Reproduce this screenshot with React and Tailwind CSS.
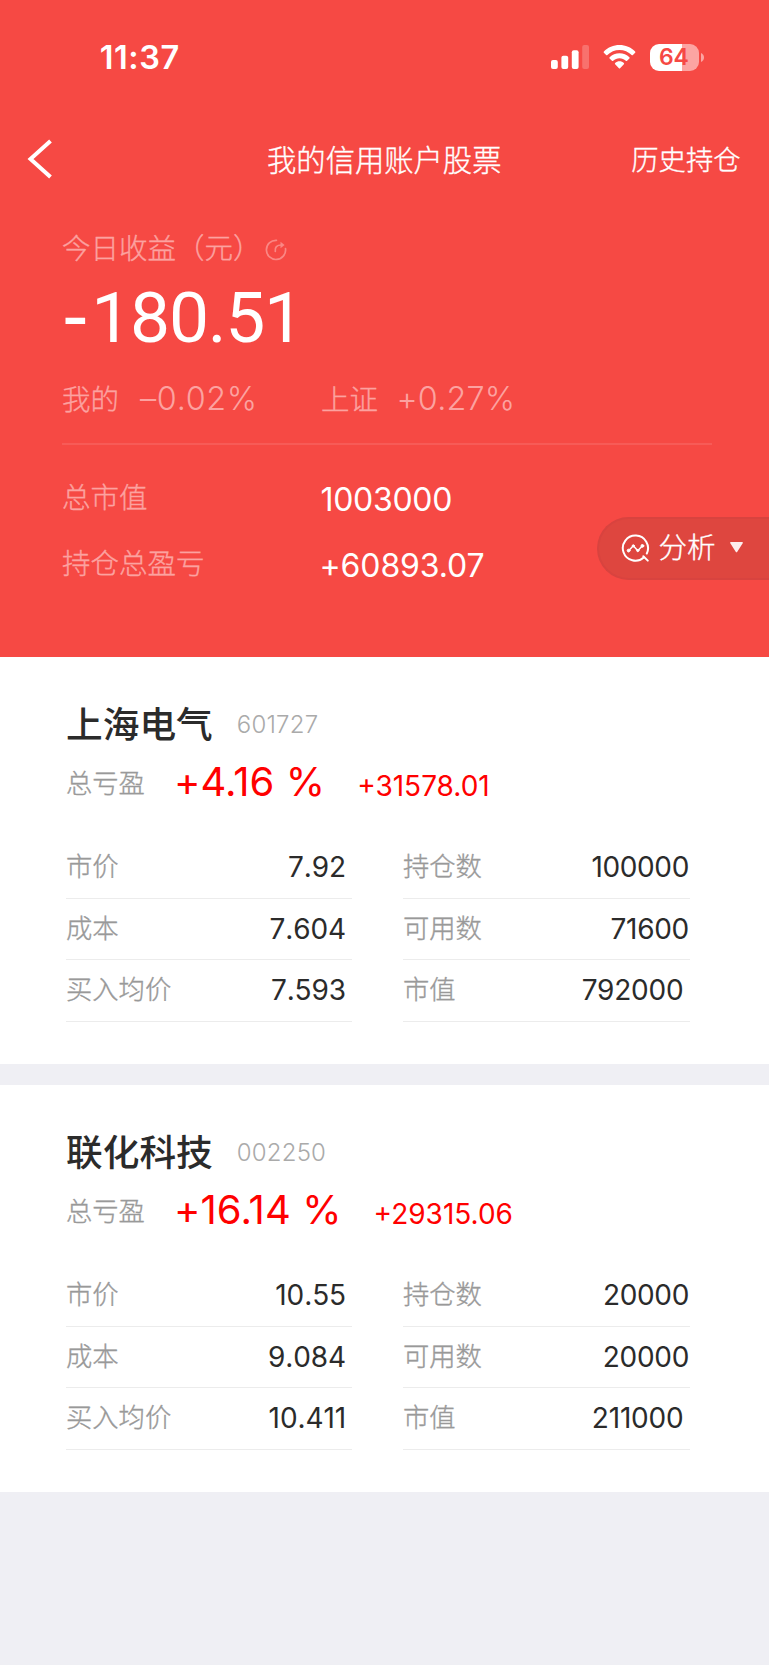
import React from "react";

const CJK = 'font-["Noto_Sans_CJK_SC",sans-serif] whitespace-nowrap leading-none';
const THIN = "font-light [-webkit-text-stroke:0.35px_currentColor]";
const NUM = 'font-["Inter","Liberation_Sans",sans-serif] whitespace-nowrap leading-none';

function SignalIcon() {
  return (
    <svg className="mt-[45px] ml-auto h-6 w-[39px] shrink-0" viewBox="0 0 39 24" fill="#fff">
      <rect x="0" y="15" width="6.8" height="9" rx="2" />
      <rect x="10.4" y="10.8" width="6.8" height="13.2" rx="2" />
      <rect x="20.8" y="5.2" width="6.8" height="18.8" rx="2" />
      <rect x="31.2" y="0" width="6.8" height="24" rx="2" opacity="0.22" />
    </svg>
  );
}

function WifiIcon() {
  return (
    <svg className="mt-[45px] ml-[13px] h-6 w-[33px] shrink-0" viewBox="0 0 34 24" preserveAspectRatio="none" fill="#fff">
      <path d="M17 0C23.2 0 28.9 2.4 33.1 6.4c.4.4.4.9 0 1.3l-2.3 2.3c-.4.4-.9.4-1.3 0C26.2 6.9 21.8 5 17 5S7.8 6.9 4.5 10c-.4.4-.9.4-1.3 0L.9 7.7c-.4-.4-.4-.9 0-1.3C5.1 2.4 10.8 0 17 0z" />
      <path d="M17 8.2c3.9 0 7.5 1.5 10.2 4 .4.4.4.9 0 1.3l-2.4 2.3c-.4.4-.9.4-1.3 0C21.8 14.2 19.5 13.2 17 13.2s-4.8 1-6.5 2.6c-.4.4-.9.4-1.3 0l-2.4-2.3c-.4-.4-.4-.9 0-1.3 2.7-2.5 6.3-4 10.2-4z" />
      <path d="M17 16.2c1.7 0 3.3.6 4.5 1.7.4.4.4.9 0 1.3l-3.9 4c-.3.4-.9.4-1.2 0l-3.9-4c-.4-.4-.4-.9 0-1.3 1.2-1.1 2.8-1.7 4.5-1.7z" />
    </svg>
  );
}

function Battery() {
  return (
    <div className="mt-11 ml-[14px] flex items-center">
      <div className="flex h-[27px] w-[49px] rounded-[9px] bg-[linear-gradient(90deg,#fff_65%,#fca4a2_65%)] pl-[9px]">
        <span className={`${NUM} mt-[2px] text-[23px] font-semibold tracking-[-0.2px] text-[#f64944]`}>64</span>
      </div>
      <svg className="ml-[2px] h-[9px] w-[3px]" viewBox="0 0 3 9">
        <path d="M0 0c1.8.8 3 2.4 3 4.5S1.8 8.2 0 9z" fill="#fca4a2" />
      </svg>
    </div>
  );
}

function ShareIcon() {
  return (
    <svg className="mt-[39px] ml-[20.5px] h-[22px] w-[22px]" viewBox="0 0 22 22" fill="none" stroke="#fa8784" strokeWidth="1.7" strokeLinecap="round">
      <path d="M11.5 1.3A9.6 9.6 0 1 0 20.5 9.5" />
      <path d="M10.3 12.3c-.6-4 1.5-6.3 6-6.3" />
      <path d="M15.5 2.8L19.6 6l-4.1 3.2z" fill="#fa8784" stroke="none" />
    </svg>
  );
}

function AnalysisIcon() {
  return (
    <svg className="mt-[14.5px] ml-[22px] h-[29px] w-[29px] shrink-0" viewBox="0 0 29 29" fill="none" stroke="#fff" strokeWidth="2" strokeLinecap="round" strokeLinejoin="round">
      <path d="M22.8 23.5A12.6 12.6 0 1 1 25.8 19.5" />
      <path d="M22.3 22.3L26.8 26.6" />
      <path d="M7.6 16.8L12.3 11.8L16.8 16.8L21.2 12" strokeWidth="1.5" />
      <circle cx="7.6" cy="16.6" r="1.4" fill="#fff" strokeWidth="1" />
      <circle cx="12.3" cy="11.9" r="1.1" fill="#fff" strokeWidth="1" />
      <circle cx="16.8" cy="16.6" r="1.1" fill="#fff" strokeWidth="1" />
      <circle cx="21.4" cy="11.9" r="1.4" fill="#fff" strokeWidth="1" />
    </svg>
  );
}

function Row({ label, value, className }) {
  return (
    <div className={`flex items-start justify-between border-b border-[#ececec] ${className}`}>
      <span className={`${CJK} ${THIN} mt-[15px] text-[26.3px] text-[#999]`}>{label}</span>
      {value}
    </div>
  );
}

function Value({ children, className }) {
  return <span className={`${NUM} mt-[16px] text-[28px] text-[#2b2b2b] ${className}`}>{children}</span>;
}

const LEFT_VALUE = "mr-[6px] tracking-[-0.1px] [font-kerning:none]";

function StockCard({ stock }) {
  return (
    <section className="h-[407px] bg-white pl-[66px]">
      <div className="flex h-[100px] items-start">
        <h2 className={`${CJK} mt-[47px] text-[36.7px] font-medium text-[#2b2b2b]`}>{stock.name}</h2>
        <span className={`${NUM} mt-[56px] ml-[24px] text-[24px] font-light tracking-[0.2px] text-[#aaa]`}>{stock.code}</span>
      </div>
      <div className="flex h-[80px] items-start">
        <span className={`${CJK} ${THIN} mt-[12px] text-[26.3px] text-[#999]`}>总亏盈</span>
        <span className={`${NUM} mt-[5px] ml-[29px] text-[40px] tracking-[0.1px] text-[#ff0000]`}>{stock.percent}</span>
        <span className={`${NUM} mt-[15px] ml-[32px] text-[28px] text-[#ff0000]`}>{stock.profit}</span>
      </div>
      <div className="flex gap-[51px]">
        <div className="w-[286px]">
          <Row className="h-[62px]" label="市价" value={<Value className={LEFT_VALUE}>{stock.price}</Value>} />
          <Row className="h-[61px]" label="成本" value={<Value className={LEFT_VALUE}>{stock.cost}</Value>} />
          <Row className="h-[62px]" label="买入均价" value={<Value className={LEFT_VALUE}>{stock.average}</Value>} />
        </div>
        <div className="w-[287px]">
          <Row className="h-[62px]" label="持仓数" value={<Value className="mr-px tracking-[-0.35px]">{stock.held}</Value>} />
          <Row className="h-[61px]" label="可用数" value={<Value className="mr-px tracking-[-0.3px]">{stock.available}</Value>} />
          <Row className="h-[62px]" label="市值" value={<Value className="mr-[6.5px] tracking-[-0.2px]">{stock.worth}</Value>} />
        </div>
      </div>
    </section>
  );
}

const stocks = [
  { name: "上海电气", code: "601727", percent: "+4.16 %", profit: "+31578.01", price: "7.92", cost: "7.604", average: "7.593", held: "100000", available: "71600", worth: "792000" },
  { name: "联化科技", code: "002250", percent: "+16.14 %", profit: "+29315.06", price: "10.55", cost: "9.084", average: "10.411", held: "20000", available: "20000", worth: "211000" },
];

export default function App() {
  return (
    <main className="h-[1665px] w-[769px] overflow-hidden bg-[#efeff4]">
      <header className="h-[657px] bg-[#f64944] text-white">
        <div className="flex h-[120px] items-start pr-[65px] pl-[99.7px]">
          <span className={`${NUM} mt-[42px] text-[32.5px] font-semibold tracking-[0.6px]`}>11:37</span>
          <SignalIcon />
          <WifiIcon />
          <Battery />
        </div>

        <nav className="grid h-20 grid-cols-[1fr_auto_1fr] items-start pr-[28.5px] pl-[27px]">
          <svg className="mt-[19px] h-10 w-[26px]" viewBox="0 0 26 40" fill="none" stroke="#fff" strokeWidth="4">
            <path d="M23.5 2L3.5 20L23.5 38" />
          </svg>
          <h1 className={`${CJK} ${THIN} mt-[23.5px] ml-px text-[29.3px]`}>我的信用账户股票</h1>
          <span className={`${CJK} ${THIN} mt-[25px] justify-self-end text-[27.3px]`}>历史持仓</span>
        </nav>

        <div className="flex h-[75px] items-start pl-[62px]">
          <span className={`${CJK} ${THIN} mt-[33px] w-[182px] text-[28.5px] text-[#fca2a0]`}>今日收益（元）</span>
          <ShareIcon />
        </div>
        <div className="flex h-[95px] items-start pl-[62px]">
          <p className='mt-[7px] font-["Roboto",sans-serif] text-[71.3px] leading-none tracking-[-1.3px] whitespace-nowrap'>
            <span className='mr-[4px] font-["Liberation_Sans",sans-serif] text-[80px] leading-[0]'>-</span>180.51
          </p>
        </div>
        <div className="mr-[57px] ml-[62px] flex h-[75px] items-start border-b-2 border-white/10 text-[#fca2a0]">
          <div className="flex w-[259px] items-start">
            <span className={`${CJK} ${THIN} mt-[14px] text-[28.5px]`}>我的</span>
            <span className={`${NUM} mt-[13px] ml-[21px] text-[32.3px] font-light tracking-[0.7px]`}>–0.02%</span>
          </div>
          <span className={`${CJK} ${THIN} mt-[14px] text-[28.5px]`}>上证</span>
          <span className={`${NUM} mt-[13px] ml-[18.5px] text-[32.3px] font-light tracking-[0.2px]`}>+0.27%</span>
        </div>

        <div className="flex justify-between pl-[62px]">
          <div className="w-[500px] pt-[37px]">
            <div className="flex h-[66px] items-start">
              <span className={`${CJK} ${THIN} w-[258.5px] text-[28.5px] text-[#fca2a0]`}>总市值</span>
              <span className={`${NUM} mt-[2px] text-[32px] tracking-[-0.3px]`}>1003000</span>
            </div>
            <div className="flex items-start">
              <span className={`${CJK} ${THIN} w-[257.5px] text-[28.5px] text-[#fca2a0]`}>持仓总盈亏</span>
              <span className={`${NUM} mt-[2px] text-[32px] tracking-[-0.1px]`}>+60893.07</span>
            </div>
          </div>
          <button className="mt-[72px] flex h-[63px] w-[172.5px] items-start rounded-l-full border-2 border-r-0 border-[#d8433f] bg-[#de463f] text-left">
            <AnalysisIcon />
            <span className={`${CJK} ${THIN} mt-[13px] ml-[9px] text-[28.5px]`}>分析</span>
            <svg className="mt-[23px] ml-[14px] h-[11px] w-[13px] shrink-0" viewBox="0 0 13 11" fill="#fdeeee">
              <path d="M1 0h11c.9 0 1.2.7.7 1.3L7.3 9.7c-.4.7-1.2.7-1.6 0L.3 1.3C-.2.7.1 0 1 0z" />
            </svg>
          </button>
        </div>
      </header>

      <div className="flex flex-col gap-[21px]">
        {stocks.map((stock) => (
          <StockCard key={stock.code} stock={stock} />
        ))}
      </div>
    </main>
  );
}
